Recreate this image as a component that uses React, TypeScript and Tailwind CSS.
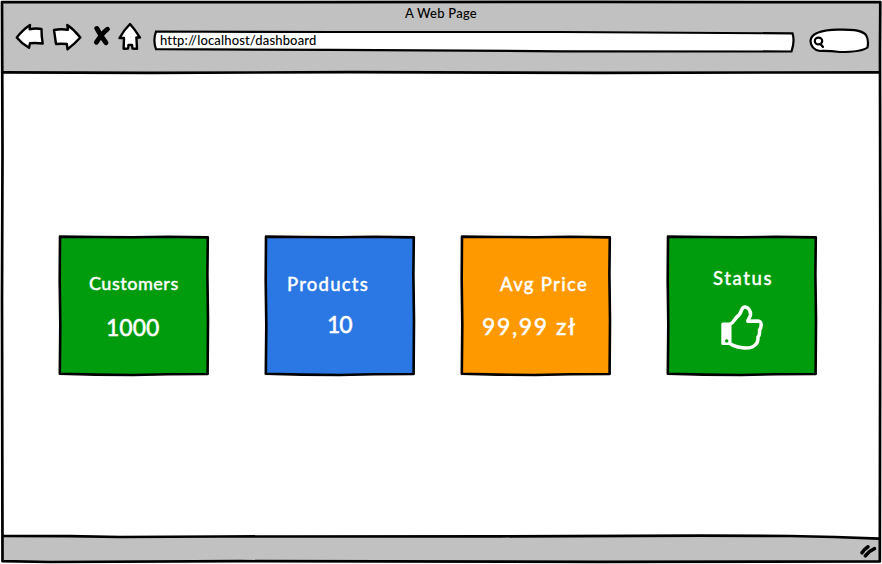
import type { ReactNode } from "react";

const font = "font-['Lato','Open_Sans',sans-serif]";

function Card({ fill, className, children }: { fill: string; className?: string; children: ReactNode }) {
  return (
    <section className={`relative h-[142px] w-[152px] shrink-0 text-white ${className ?? ""}`}>
      <svg className="absolute inset-0" width="152" height="142" viewBox="0 0 152 142" aria-hidden="true">
        <path
          d="M2 1.6 L40 2 L75 2.2 L110 1.8 L149.8 2.4 L149.4 40 L150 85 L149.6 139 L110 139.2 L75 140 L38 139.6 L1.8 138.8 L2.3 90 L1.7 45 Z"
          fill={fill}
          stroke="#000"
          strokeWidth="2.6"
          strokeLinejoin="round"
        />
      </svg>
      <div className="relative flex flex-col items-start [-webkit-text-stroke:0.35px_#fff]">{children}</div>
    </section>
  );
}

export default function App() {
  return (
    <div className={`relative flex h-[564px] w-[882px] flex-col overflow-hidden bg-white ${font}`}>
      <header className="mx-[3px] mt-[3px] flex h-[70px] shrink-0 flex-col bg-[#c1c1c1] text-black">
        <h1 className="h-[20px] text-center text-[13px] leading-[20px] font-medium tracking-[0.25px]">A Web Page</h1>
        <div className="flex h-[40px] items-start">
          <svg width="148" height="34" viewBox="12 20 148 34" className="ml-[9px] -mt-[3px] shrink-0" fill="#fff" stroke="#000" strokeWidth="2.4" strokeLinejoin="round" strokeLinecap="round">
            <path d="M16.8 37.5 Q23 29.5 30 25 L29.6 29.2 Q36 28 41.5 29 Q41.4 36 42.7 43.5 Q36 42.6 30 43.2 L29 47.8 Q22 44 16.8 37.5 Z" />
            <path d="M54 30 Q60 28.8 68 29.7 L67.3 25 Q74 29.5 80.3 37.5 Q75 43.5 67.5 49.3 L66.8 44 Q61 43.6 56 44 Q55 37 54 30 Z" />
            <path d="M96.8 28.4 Q100 35 106 42.8 M107.5 29.2 Q102.5 33 96.3 42.3" strokeWidth="4.8" fill="none" />
            <path d="M130 24 Q135 29.5 140 37.6 L136.4 37.4 L137 48.8 L132.5 48.5 L132 45 L128.5 45 L128 48.6 L123.6 48.8 L124 38 L119.5 38 Q124 30 130 24 Z" />
          </svg>
          <div className="relative -ml-[8px] mt-[7px] h-[23px] w-[643px] shrink-0">
            <svg className="absolute inset-0" width="643" height="23" viewBox="0 0 643 23" aria-hidden="true">
              <path d="M4 1.5 L180 2 L410 2 L640.5 3.4 Q643 11 639.5 21.5 L410 21.3 L180 19.8 L4 19.2 Q.8 10.5 4 1.5 Z" fill="#fff" stroke="#000" strokeWidth="2.2" />
            </svg>
            <span className="relative ml-[8px] block text-[13px] leading-[20px] font-medium tracking-[0.15px] [font-variant-ligatures:none]">http://localhost/dashboard</span>
          </div>
          <svg width="62" height="26" viewBox="808 28 62 26" className="ml-[13px] mt-[5px] shrink-0" fill="none" stroke="#000" strokeWidth="2.2">
            <path d="M810.5 41 C811 32 824 30 838 29.7 C850 29.5 861 29.5 866 35 Q869 40 867.5 47.5 C863 51 850 52 840 52 Q830 50.8 820 51 Q811 49.5 810.5 41 Z" fill="#fff" />
            <ellipse cx="818.5" cy="41" rx="3.7" ry="3.4" />
            <path d="M820.5 44 L823 47" strokeLinecap="round" />
          </svg>
        </div>
      </header>

      <main className="flex h-[464px] shrink-0 items-start pt-[162px] pl-[58px]">
        <Card fill="#009c0d">
          <h2 className="mt-[36px] ml-[31px] text-[18px] leading-[24px] font-medium tracking-[0.5px] whitespace-nowrap">Customers</h2>
          <p className="mt-[18px] ml-[48px] text-[23px] leading-[28px] font-medium">1000</p>
        </Card>
        <Card fill="#2b78e4" className="ml-[54px]">
          <h2 className="mt-[37px] ml-[23px] text-[18.5px] leading-[24px] font-medium tracking-[1.2px] whitespace-nowrap">Products</h2>
          <p className="mt-[14px] ml-[63px] text-[23px] leading-[28px] font-medium tracking-[-1.2px]">10</p>
        </Card>
        <Card fill="#ff9900" className="ml-[44px]">
          <h2 className="mt-[37px] ml-[40px] text-[18.5px] leading-[24px] font-medium tracking-[1.3px] whitespace-nowrap">Avg Price</h2>
          <p className="mt-[16px] ml-[22px] text-[23px] leading-[28px] font-medium tracking-[1.6px] whitespace-nowrap">99,99 zł</p>
        </Card>
        <Card fill="#009c0d" className="ml-[54px]">
          <h2 className="mt-[31px] ml-[47px] text-[18.5px] leading-[24px] font-medium tracking-[1.6px] whitespace-nowrap">Status</h2>
          <svg width="44" height="48" viewBox="720 304 44 48" className="mt-[14px] ml-[54px]" fill="none" stroke="#fff" strokeWidth="3.5" strokeLinejoin="round" strokeLinecap="round">
            <path d="M723 322.5 H731.5 V345 H723 Q721.3 345 721.3 343.5 V324 Q721.3 322.5 723 322.5 Z M726.7 339.2 a1.7 1.7 0 1 0 .01 0 Z" fill="#fff" fillRule="evenodd" stroke="none" />
            <path d="M731 323.7 C733 323 735 318 739 315 C742 312 741 307.5 744.5 307 C748 306.5 751 311 750.5 315 C750 318 747.5 319.5 747.8 321.3 L757 321 Q761.5 321 761.2 325 Q761 328.5 759.5 330 Q760 335 758 337 Q758.2 343 755 345 Q752.5 348.2 745 348 Q736 347.5 731 344.3" />
          </svg>
        </Card>
      </main>

      <footer className="mx-[3px] flex h-[24px] shrink-0 items-center justify-end bg-[#c1c1c1]">
        <svg width="18" height="16" viewBox="859 543 18 16" className="mt-[4px] mr-[2px]" fill="none" stroke="#000" strokeWidth="3.6" strokeLinecap="round">
          <path d="M862 552.8 Q864.5 549 868 546.8 M865.3 555.8 Q869 551 874.5 548.7" />
        </svg>
      </footer>

      <svg className="pointer-events-none absolute inset-0" width="882" height="564" viewBox="0 0 882 564" fill="none" stroke="#000" strokeWidth="2.7" strokeLinejoin="round" aria-hidden="true">
        <path d="M740 535 L880 535 L880 539 L830 537.5 Z" fill="#fff" stroke="none" />
        <path d="M2 2 L300 2.2 L600 1.8 L880.3 2.2 L880 50 L880.3 270 L879.8 561.5 L600 561.8 L240 561.2 L50 562 L2.5 561.2 L2 300 L2.5 150 Z" />
        <path d="M3 72.3 L150 72.8 L350 72.2 L600 72.8 L880 72.3" />
        <path d="M3 536 L70 536.2 L120 537 L220 536.5 L500 536.3 L700 535.7 L790 536 L835 537 L879 538.7" />
      </svg>
    </div>
  );
}
